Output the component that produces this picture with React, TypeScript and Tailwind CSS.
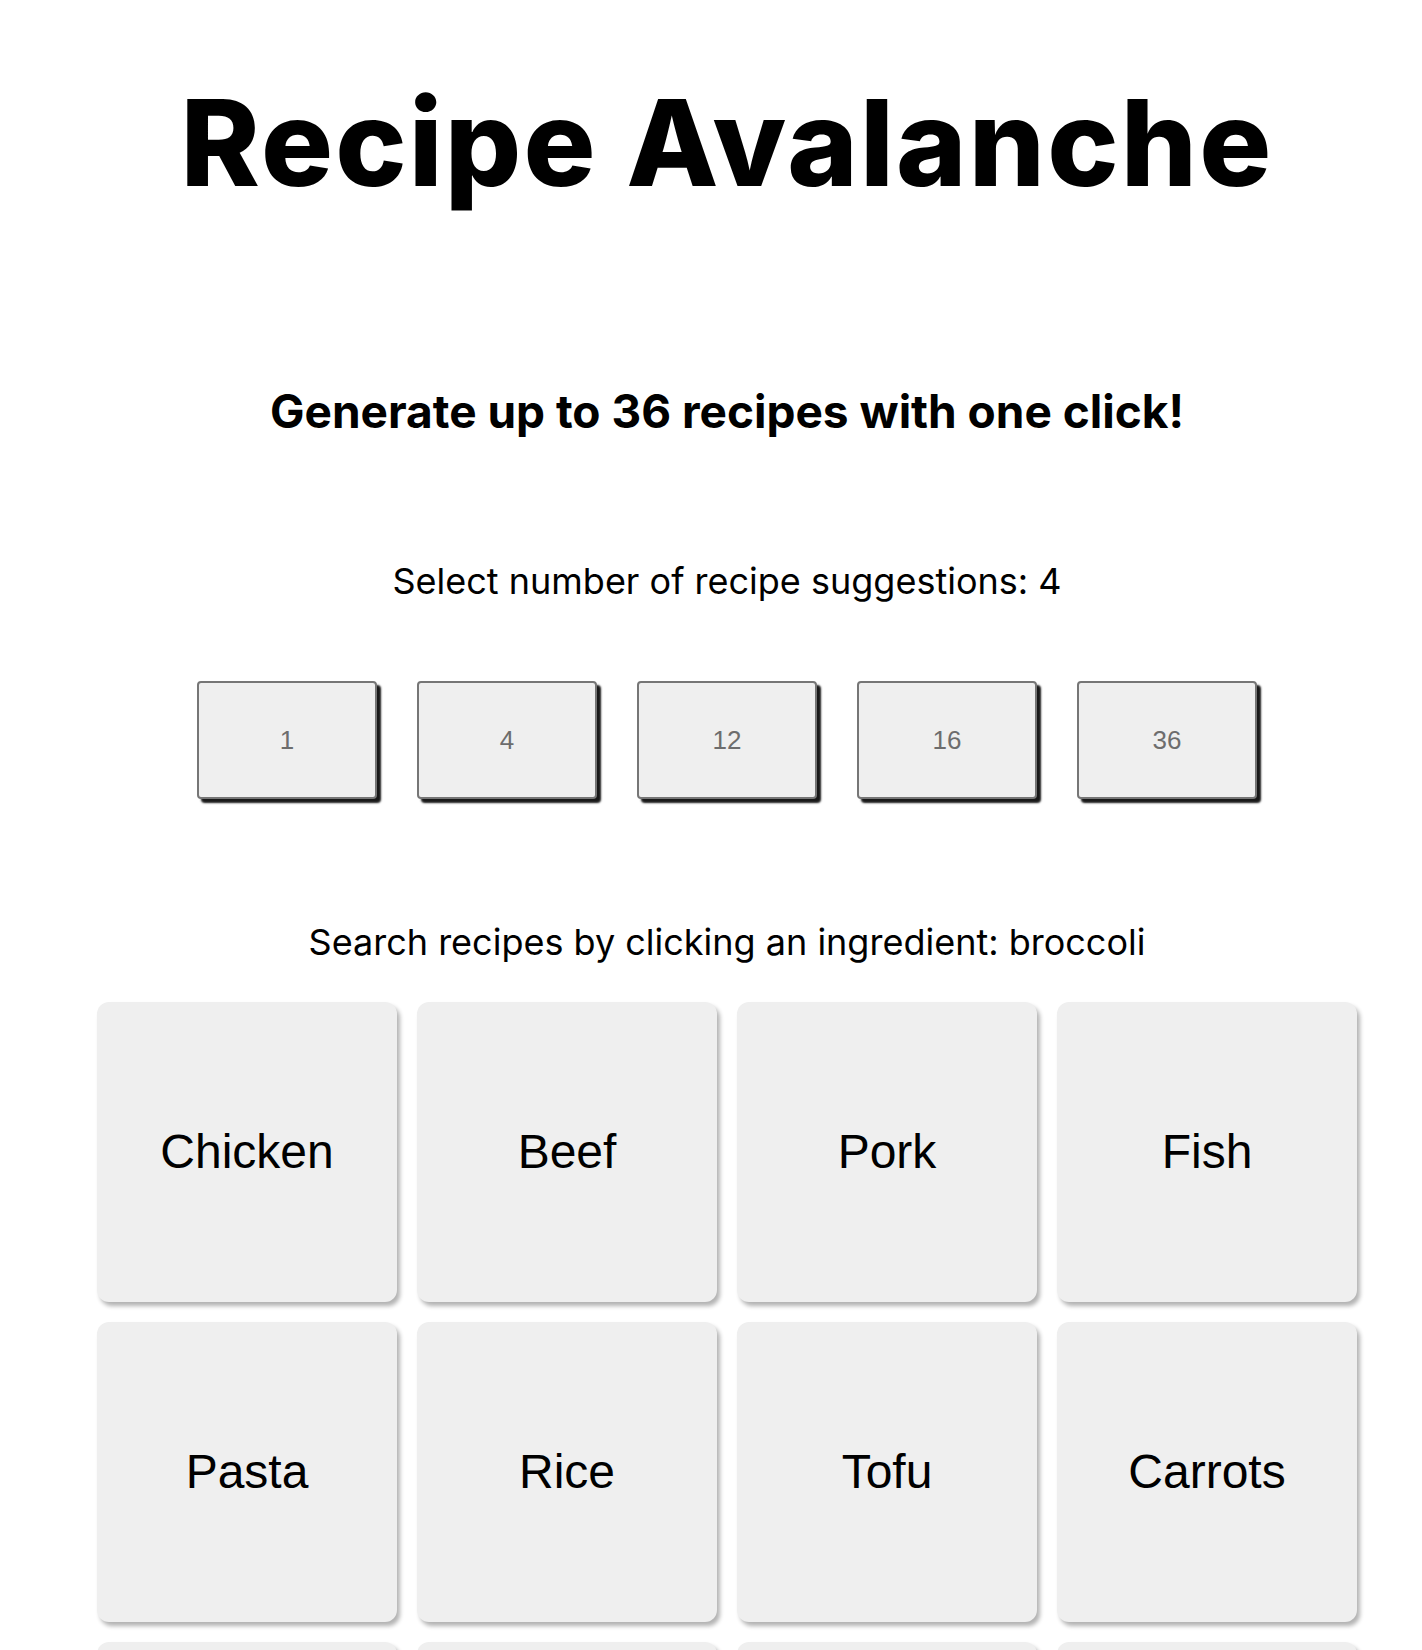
import React from "react";

const counts = [1, 4, 12, 16, 36];
const ingredients = [
  "Chicken",
  "Beef",
  "Pork",
  "Fish",
  "Pasta",
  "Rice",
  "Tofu",
  "Carrots",
  "Potatoes",
  "Broccoli",
  "Spinach",
  "Mushrooms",
];

export default function App() {
  return (
    <div className="min-h-screen bg-white pl-8 text-black font-['Inter',sans-serif]">
      <h1 className="pt-[83px] text-center text-[120px] font-extrabold leading-none tracking-[0.018em]">
        Recipe Avalanche
      </h1>
      <h2 className="mt-[185px] text-center text-[46px] font-bold leading-none">
        Generate up to 36 recipes with one click!
      </h2>
      <p className="mt-[129px] text-center text-[36px] leading-none">
        Select number of recipe suggestions: 4
      </p>
      <div className="mt-[82px] flex justify-center gap-10">
        {counts.map((c) => (
          <button
            key={c}
            className="flex h-[118px] w-[180px] items-center justify-center rounded-[4px] border-2 border-[#767676] bg-[#efefef] font-['Liberation_Sans',Arial,sans-serif] text-[26px] text-[#6d6d6d] shadow-[4px_4px_2px_rgba(0,0,0,0.9)]"
          >
            {c}
          </button>
        ))}
      </div>
      <p className="mt-[125px] text-center text-[36px] leading-none">
        Search recipes by clicking an ingredient: broccoli
      </p>
      <div className="mt-[42px] grid grid-cols-[repeat(4,300px)] justify-center gap-5 pb-10">
        {ingredients.map((name) => (
          <button
            key={name}
            className="flex h-[300px] w-[300px] items-center justify-center rounded-xl bg-[#efefef] font-['Liberation_Sans',Arial,sans-serif] text-[48px] text-black shadow-[3px_4px_4px_rgba(0,0,0,0.3)]"
          >
            {name}
          </button>
        ))}
      </div>
    </div>
  );
}
